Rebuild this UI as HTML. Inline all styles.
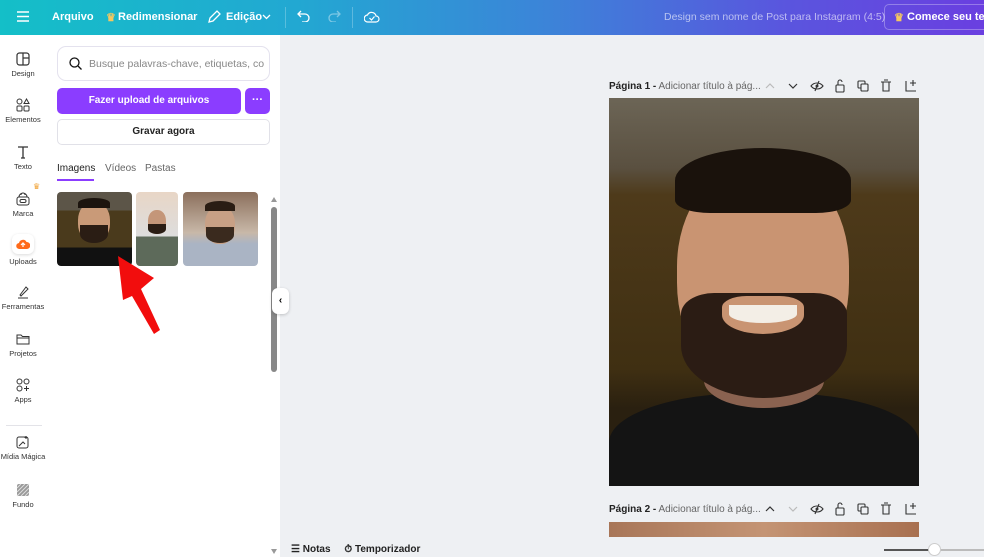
<!DOCTYPE html>
<html><head><meta charset="utf-8"><style>
*{box-sizing:border-box;margin:0;padding:0}
body{width:984px;height:557px;overflow:hidden;font-family:"Liberation Sans",sans-serif;background:#eef0f3;position:relative}
.top{position:absolute;left:0;top:0;width:984px;height:35px;background:linear-gradient(90deg,#14bfc8 0%,#22a8d2 30%,#3b85d8 55%,#5a55de 80%,#6a3fe0 100%);color:#fff;font-size:11px;font-weight:bold}
.top span{position:absolute;top:11px;white-space:nowrap}
.side{position:absolute;left:0;top:35px;width:46px;height:522px;background:#fff}
.si{position:absolute;left:0;width:46px;text-align:center;font-size:7.5px;color:#333}
.si svg{display:block;margin:0 auto 3px}
.panel{position:absolute;left:46px;top:35px;width:234px;height:522px;background:#fff}
.abs{position:absolute;white-space:nowrap}
.ph{position:absolute;border-radius:4px;overflow:hidden}
</style></head><body>
<div class="top">
<svg class="abs" style="left:17px;top:11px" width="12" height="11"><path d="M0 1h12M0 5.5h12M0 10h12" stroke="#fff" stroke-width="1.5"/></svg>
<span style="left:52px">Arquivo</span>
<span style="left:106px;color:#f5c860">♛</span><span style="left:118px">Redimensionar</span>
<svg class="abs" style="left:207px;top:10px" width="14" height="14"><path d="M2 12l1-4 7-7 3 3-7 7z" fill="none" stroke="#fff" stroke-width="1.3"/></svg>
<span style="left:226px">Edição</span>
<svg class="abs" style="left:262px;top:14px" width="9" height="6"><path d="M1 1l3.5 3.5L8 1" fill="none" stroke="#fff" stroke-width="1.3"/></svg>
<div class="abs" style="left:285px;top:7px;width:1px;height:21px;background:rgba(255,255,255,.25)"></div>
<svg class="abs" style="left:297px;top:10px" width="14" height="12"><path d="M4 1L1 4l3 3M1 4h7a4 4 0 010 8H5" fill="none" stroke="#fff" stroke-width="1.3"/></svg>
<svg class="abs" style="left:327px;top:10px" width="14" height="12"><path d="M10 1l3 3-3 3M13 4H6a4 4 0 000 8h3" fill="none" stroke="rgba(255,255,255,.4)" stroke-width="1.3"/></svg>
<div class="abs" style="left:352px;top:7px;width:1px;height:21px;background:rgba(255,255,255,.25)"></div>
<svg class="abs" style="left:364px;top:10px" width="16" height="13"><path d="M4 12h8a3 3 0 000-6 4.5 4.5 0 00-8.5-1A3.5 3.5 0 004 12z M5.5 8l2 2 3-3.5" fill="none" stroke="#fff" stroke-width="1.2"/></svg>
<span style="left:664px;font-weight:normal;color:rgba(255,255,255,.6);font-size:10.5px">Design sem nome de Post para Instagram (4:5)</span>
<div class="abs" style="left:884px;top:4px;width:110px;height:26px;border:1px solid rgba(255,255,255,.3);border-radius:5px"></div>
<span style="left:894px;color:#f5c860">♛</span><span style="left:907px">Comece seu teste</span>
</div>

<div class="side">
<div class="si" style="top:17px"><svg width="14" height="14"><rect x="1" y="1" width="12" height="12" rx="2.5" fill="none" stroke="#333" stroke-width="1.2"/><path d="M7 1v12M7 6h6" stroke="#333" stroke-width="1.2"/></svg>Design</div>
<div class="si" style="top:63px"><svg width="14" height="14"><circle cx="3.5" cy="3.5" r="2.5" fill="none" stroke="#333"/><path d="M10.5 1l2.5 4.5h-5z" fill="none" stroke="#333"/><rect x="1" y="8" width="5" height="5" rx="1" fill="none" stroke="#333"/><rect x="8" y="8" width="5" height="5" rx="1" fill="none" stroke="#333"/></svg>Elementos</div>
<div class="si" style="top:110px"><svg width="14" height="14"><path d="M2 2h10M7 2v11M5 13h4" stroke="#333" stroke-width="1.3" fill="none"/></svg>Texto</div>
<div class="abs" style="left:33px;top:147px;color:#f0a030;font-size:8px">♛</div>
<div class="si" style="top:157px"><svg width="14" height="14"><rect x="1" y="5" width="12" height="8" rx="2" fill="none" stroke="#333"/><rect x="4" y="7.5" width="6" height="3" rx="1.5" fill="none" stroke="#333"/><path d="M3 5a4 4 0 018 0M5 3a2 2 0 014 0" fill="none" stroke="#333"/></svg>Marca</div>
<div class="abs" style="left:12px;top:199px;width:22px;height:20px;background:#fff;border-radius:6px;box-shadow:0 1px 3px rgba(0,0,0,.15)"></div>
<div class="si" style="top:202px"><svg width="14" height="14"><path d="M3.5 12a3 3 0 01-.5-6 4 4 0 017.5-1 3 3 0 01.5 7z" fill="#ff6a1a"/><path d="M7 10V6M5 8l2-2 2 2" stroke="#fff" stroke-width="1.2" fill="none"/></svg><span style="position:relative;top:3px">Uploads</span></div>
<div class="si" style="top:250px"><svg width="14" height="14"><path d="M4 10l6-8 2 2-7 7zM2 13h10" stroke="#333" fill="none"/></svg>Ferramentas</div>
<div class="si" style="top:297px"><svg width="14" height="14"><path d="M1 3h4l1.5 1.5H13V12H1z M1 6h12" fill="none" stroke="#333"/></svg>Projetos</div>
<div class="si" style="top:343px"><svg width="14" height="14"><circle cx="3.5" cy="3.5" r="2.5" fill="none" stroke="#333"/><circle cx="10.5" cy="3.5" r="2.5" fill="none" stroke="#333"/><circle cx="3.5" cy="10.5" r="2.5" fill="none" stroke="#333"/><path d="M10.5 8v5M8 10.5h5" stroke="#333"/></svg>Apps</div>
<div class="abs" style="left:6px;top:390px;width:36px;height:1px;background:#e3e3e8"></div>
<div class="si" style="top:400px"><svg width="14" height="14"><rect x="1" y="2" width="11" height="11" rx="2" fill="none" stroke="#333"/><path d="M3 11l4-4 2 2M10 1v3M8.5 2.5h3" stroke="#333" fill="none"/></svg>Mídia Mágica</div>
<div class="si" style="top:448px"><svg width="14" height="14"><rect x="1" y="1" width="12" height="12" rx="2" fill="#999"/><path d="M1 5l4-4M1 9l8-8M1 13L13 1M5 13l8-8M9 13l4-4" stroke="#ddd"/></svg>Fundo</div>
</div>

<div class="panel">
<div class="abs" style="left:11px;top:11px;width:213px;height:35px;border:1px solid #e4e2ee;border-radius:9px"></div>
<svg class="abs" style="left:23px;top:22px" width="13" height="13"><circle cx="5.5" cy="5.5" r="4.5" fill="none" stroke="#111" stroke-width="1.3"/><path d="M9 9l3.5 3.5" stroke="#111" stroke-width="1.3"/></svg>
<div class="abs" style="left:43px;top:23px;font-size:10.5px;color:#888">Busque palavras-chave, etiquetas, co</div>
<div class="abs" style="left:11px;top:53px;width:184px;height:26px;background:#8b3dff;border-radius:5px;color:#fff;font-size:10px;font-weight:bold;text-align:center;line-height:26px">Fazer upload de arquivos</div>
<div class="abs" style="left:199px;top:53px;width:25px;height:26px;background:#8b3dff;border-radius:5px;color:#fff;font-size:11px;font-weight:bold;text-align:center;line-height:24px">···</div>
<div class="abs" style="left:11px;top:84px;width:213px;height:26px;border:1px solid #e1e1e8;border-radius:5px;font-size:10px;font-weight:bold;text-align:center;line-height:24px;color:#222">Gravar agora</div>
<div class="abs" style="left:11px;top:128px;font-size:10px;color:#222">Imagens</div>
<div class="abs" style="left:11px;top:144px;width:37px;height:2px;background:#8b3dff"></div>
<div class="abs" style="left:59px;top:128px;font-size:10px;color:#666">Vídeos</div>
<div class="abs" style="left:99px;top:128px;font-size:10px;color:#666">Pastas</div>
<div class="ph" style="left:11px;top:157px;width:75px;height:74px;background:linear-gradient(#5c5548 0 25%,#4a3a1c 25% 75%,#111 75%)">
 <div class="abs" style="left:21px;top:10px;width:32px;height:40px;border-radius:45%;background:#c99a78"></div>
 <div class="abs" style="left:23px;top:33px;width:28px;height:18px;border-radius:0 0 50% 50%;background:#2a1d14"></div>
 <div class="abs" style="left:21px;top:6px;width:32px;height:10px;border-radius:50% 50% 0 0;background:#1c140e"></div>
</div>
<div class="ph" style="left:90px;top:157px;width:42px;height:74px;background:linear-gradient(#e8d6c6,#ddd 60%,#5d6a5a 60%)">
 <div class="abs" style="left:12px;top:18px;width:18px;height:24px;border-radius:45%;background:#c49679"></div>
 <div class="abs" style="left:12px;top:32px;width:18px;height:10px;border-radius:0 0 50% 50%;background:#2a1d14"></div>
</div>
<div class="ph" style="left:137px;top:157px;width:75px;height:74px;background:linear-gradient(#8b6f5c,#c8b8a8 55%,#aab4c4 70%)">
 <div class="abs" style="left:22px;top:14px;width:30px;height:38px;border-radius:45%;background:#c8a085"></div>
 <div class="abs" style="left:23px;top:35px;width:28px;height:16px;border-radius:0 0 50% 50%;background:#3a2a1e"></div>
 <div class="abs" style="left:22px;top:9px;width:30px;height:10px;border-radius:50% 50% 0 0;background:#2a1d14"></div>
</div>
<div class="abs" style="left:225px;top:162px;width:0;height:0;border-left:3px solid transparent;border-right:3px solid transparent;border-bottom:5px solid #999"></div>
<div class="abs" style="left:225px;top:172px;width:6px;height:165px;background:#888;border-radius:3px"></div>
<div class="abs" style="left:225px;top:514px;width:0;height:0;border-left:3px solid transparent;border-right:3px solid transparent;border-top:5px solid #999"></div>
</div>
<svg class="abs" style="left:0;top:0" width="300" height="400"><path d="M118 256L154 278 141 289 160 330 154 334 132 296 123 300z" fill="#f20d0d"/></svg>
<div class="abs" style="left:272px;top:288px;width:17px;height:26px;background:#fff;border-radius:6px;box-shadow:0 1px 3px rgba(0,0,0,.2);font-size:10px;text-align:center;line-height:26px;font-weight:bold">‹</div>

<div class="abs" style="left:609px;top:81px;font-size:10px;color:#666"><b style="color:#222">Página 1 -</b> Adicionar título à pág...</div>
<svg class="abs" style="left:760px;top:78px" width="160" height="16">
<path d="M6 10l4-4 4 4" fill="none" stroke="#bbb" stroke-width="1.2"/>
<path d="M29 6l4 4 4-4" fill="none" stroke="#333" stroke-width="1.2"/>
<path d="M51 8c3-4 9-4 12 0c-3 4-9 4-12 0zM59 3l-4 10" fill="none" stroke="#333" stroke-width="1.1"/><circle cx="57" cy="8" r="1.5" fill="#333"/>
<rect x="76" y="7" width="8" height="7" rx="1" fill="none" stroke="#333" stroke-width="1.1"/><path d="M78 7V4a2 2 0 014 0" fill="none" stroke="#333" stroke-width="1.1"/>
<rect x="98" y="3" width="7" height="7" rx="1" fill="none" stroke="#333" stroke-width="1.1"/><rect x="101" y="6" width="7" height="7" rx="1" fill="#eef0f3" stroke="#333" stroke-width="1.1"/>
<path d="M121 4h10M123 4v9h6V4M124 2h4" fill="none" stroke="#333" stroke-width="1.1"/>
<path d="M146 3v10h10M150 5h6M153 2v6" fill="none" stroke="#333" stroke-width="1.1"/>
</svg>
<div class="abs" style="left:609px;top:98px;width:310px;height:388px;overflow:hidden;background:linear-gradient(#6c6556 0%,#5a5040 18%,#4e3a1a 25%,#3f2f12 70%,#2a2010 80%)">
 <div class="abs" style="left:0;top:295px;width:310px;height:110px;background:#141414;border-radius:45% 45% 0 0"></div>
 <div class="abs" style="left:95px;top:255px;width:120px;height:55px;background:#8a6250;border-radius:0 0 50% 50%"></div>
 <div class="abs" style="left:68px;top:65px;width:172px;height:230px;border-radius:45% 45% 48% 48%;background:#c99472"></div>
 <div class="abs" style="left:66px;top:50px;width:176px;height:65px;border-radius:50% 50% 20% 20%;background:#1a120c"></div>
 <div class="abs" style="left:72px;top:195px;width:166px;height:105px;border-radius:20% 20% 50% 50%;background:#2b1c14"></div>
 <div class="abs" style="left:113px;top:198px;width:82px;height:38px;border-radius:30% 30% 50% 50%;background:#c99472"></div>
 <div class="abs" style="left:120px;top:207px;width:68px;height:18px;border-radius:0 0 50% 50%;background:#f3eee6"></div>
</div>
<div class="abs" style="left:609px;top:504px;font-size:10px;color:#666"><b style="color:#222">Página 2 -</b> Adicionar título à pág...</div>
<svg class="abs" style="left:760px;top:501px" width="160" height="16">
<path d="M6 10l4-4 4 4" fill="none" stroke="#333" stroke-width="1.2"/>
<path d="M29 6l4 4 4-4" fill="none" stroke="#bbb" stroke-width="1.2"/>
<path d="M51 8c3-4 9-4 12 0c-3 4-9 4-12 0zM59 3l-4 10" fill="none" stroke="#333" stroke-width="1.1"/><circle cx="57" cy="8" r="1.5" fill="#333"/>
<rect x="76" y="7" width="8" height="7" rx="1" fill="none" stroke="#333" stroke-width="1.1"/><path d="M78 7V4a2 2 0 014 0" fill="none" stroke="#333" stroke-width="1.1"/>
<rect x="98" y="3" width="7" height="7" rx="1" fill="none" stroke="#333" stroke-width="1.1"/><rect x="101" y="6" width="7" height="7" rx="1" fill="#eef0f3" stroke="#333" stroke-width="1.1"/>
<path d="M121 4h10M123 4v9h6V4M124 2h4" fill="none" stroke="#333" stroke-width="1.1"/>
<path d="M146 3v10h10M150 5h6M153 2v6" fill="none" stroke="#333" stroke-width="1.1"/>
</svg>
<div class="abs" style="left:609px;top:522px;width:310px;height:15px;background:linear-gradient(90deg,#a87658,#c49474,#a87050)"></div>
<div class="abs" style="left:291px;top:544px;font-size:10px;font-weight:bold;color:#222">☰ Notas &nbsp;&nbsp;&nbsp; ⏱ Temporizador</div>
<div class="abs" style="left:884px;top:549px;width:100px;height:2px;background:#bbb"><div style="width:50px;height:2px;background:#555"></div></div>
<div class="abs" style="left:928px;top:543px;width:13px;height:13px;border-radius:50%;background:#fff;border:1px solid #ccc"></div>
</body></html>
